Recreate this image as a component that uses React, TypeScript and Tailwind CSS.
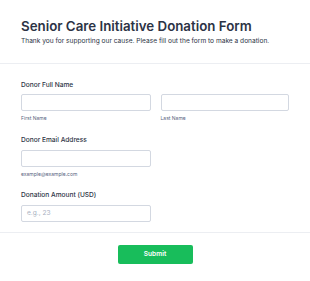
import React from "react";

export default function App() {
  return (
    <div className="w-[310px] h-[281px] bg-white overflow-hidden" style={{ fontFamily: "Inter, 'Noto Sans', sans-serif" }}>
      <div className="px-[21px] pt-[18px] pb-[17px]">
        <h1 className="text-[13.3px] leading-[16px] font-semibold text-[#2c3345]">Senior Care Initiative Donation Form</h1>
        <p className="mt-[2.5px] text-[6.6px] leading-[9px] text-[#2c3345]">Thank you for supporting our cause. Please fill out the form to make a donation.</p>
      </div>
      <div className="h-px bg-[#eceef2]" />
      <div className="px-[21px] pt-[17px]">
        <div className="text-[6.6px] leading-[9px] font-medium text-[#2c3345]">Donor Full Name</div>
        <div className="mt-[4px] flex gap-[10px]">
          <div className="w-[131px]">
            <div className="h-[17px] rounded-[2px] border border-[#d3d8e1] bg-white" />
            <div className="mt-[4px] text-[5px] leading-[7px] text-[#57647e]">First Name</div>
          </div>
          <div className="w-[130px]">
            <div className="h-[17px] rounded-[2px] border border-[#d3d8e1] bg-white" />
            <div className="mt-[4px] text-[5px] leading-[7px] text-[#57647e]">Last Name</div>
          </div>
        </div>
        <div className="mt-[14.5px] text-[6.6px] leading-[9px] font-medium text-[#2c3345]">Donor Email Address</div>
        <div className="mt-[5px] w-[130px] h-[17px] rounded-[2px] border border-[#d3d8e1] bg-white" />
        <div className="mt-[3.5px] text-[5px] leading-[7px] text-[#57647e]">example@example.com</div>
        <div className="mt-[13.5px] text-[6.6px] leading-[9px] font-medium text-[#2c3345]">Donation Amount (USD)</div>
        <div className="mt-[5px] w-[130px] h-[17px] rounded-[2px] border border-[#d3d8e1] bg-white flex items-center px-[5px] text-[6.6px] text-[#a9b1c1]">e.g., 23</div>
      </div>
      <div className="mt-[10px] h-px bg-[#eceef2]" />
      <div className="flex justify-center pt-[12px]">
        <button className="w-[75px] h-[19px] rounded-[2px] bg-[#18bd5b] text-white text-[6.6px] font-semibold">Submit</button>
      </div>
    </div>
  );
}
